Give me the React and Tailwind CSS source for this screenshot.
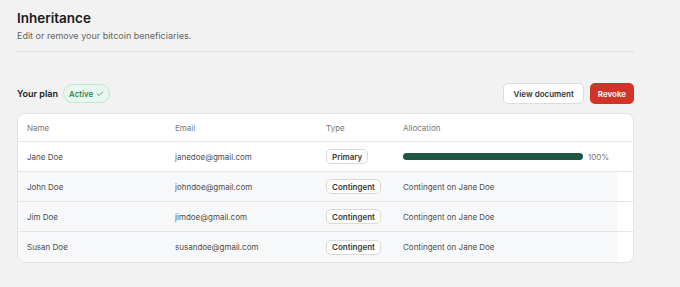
import { Check } from "lucide-react";

const rows = [
  { name: "Jane Doe", email: "janedoe@gmail.com", type: "Primary", alloc: 100 },
  { name: "John Doe", email: "johndoe@gmail.com", type: "Contingent", on: "Jane Doe" },
  { name: "Jim Doe", email: "jimdoe@gmail.com", type: "Contingent", on: "Jane Doe" },
  { name: "Susan Doe", email: "susandoe@gmail.com", type: "Contingent", on: "Jane Doe" },
];

function Badge({ children }) {
  return (
    <span className="inline-flex h-[15px] items-center rounded-[5px] border border-[#d9d9d9] bg-white px-[5px] text-[8px] font-semibold text-[#3a3a3a]">
      {children}
    </span>
  );
}

function Row({ row, last }) {
  const shaded = row.type != "Primary";
  return (
    <div className={"flex h-[30px] " + (last ? "" : "border-b border-[#e6e6e6]")}>
      <div
        className={
          "grid h-full w-[599px] grid-cols-[148px_151px_77px_1fr] items-center pl-[9px] " +
          (shaded ? "bg-[#f7f8fa]" : "bg-white")
        }
      >
        <div className="text-[#4d4d4d]">{row.name}</div>
        <div className="text-[#4d4d4d]">{row.email}</div>
        <div>
          <Badge>{row.type}</Badge>
        </div>
        {row.alloc ? (
          <div className="flex items-center gap-[5px]">
            <div className="h-[7px] w-[180px] rounded-full bg-[#1e5641]" />
            <span className="text-[#777]">{row.alloc}%</span>
          </div>
        ) : (
          <div className="text-[#4d4d4d]">Contingent on {row.on}</div>
        )}
      </div>
    </div>
  );
}

export default function App() {
  return (
    <div
      className="min-h-[287px] bg-[#f2f2f2] pl-[17px] pt-[9px]"
      style={{ fontFamily: "Inter, 'Noto Sans', sans-serif" }}
    >
      <div className="w-[617px]">
        <h1 className="text-[13.5px] leading-[19px] font-semibold text-[#1a1a1a]">Inheritance</h1>
        <p className="mt-[1px] text-[9px] leading-[14px] text-[#666]">Edit or remove your bitcoin beneficiaries.</p>
        <div className="mt-[8px] h-px bg-[#dcdcdc]" />

        <div className="mt-[31px] flex items-center justify-between">
          <div className="flex items-center gap-[5px]">
            <span className="text-[9px] font-semibold text-[#1a1a1a]">Your plan</span>
            <span className="inline-flex h-[19px] items-center gap-[3px] rounded-full border border-[#bfe8cf] bg-[#e9f8ef] px-[5px] text-[8px] font-medium text-[#1f7a46]">
              Active
              <Check size={8} strokeWidth={2} />
            </span>
          </div>
          <div className="flex items-center gap-[6px]">
            <button className="h-[21px] rounded-[5px] border border-[#dcdcdc] bg-white px-[9px] text-[8px] font-semibold text-[#333]">
              View document
            </button>
            <button className="h-[21px] rounded-[5px] bg-[#d2322a] px-[8px] text-[8px] font-semibold text-white">
              Revoke
            </button>
          </div>
        </div>

        <div className="mt-[9px] overflow-hidden rounded-[8px] border border-[#e3e3e3] bg-white text-[8px]">
          <div className="grid h-[28px] grid-cols-[148px_151px_77px_1fr] items-center border-b border-[#e6e6e6] pl-[9px] text-[#777]">
            <div>Name</div>
            <div>Email</div>
            <div>Type</div>
            <div>Allocation</div>
          </div>
          {rows.map((r, i) => (
            <Row key={i} row={r} last={i == rows.length - 1} />
          ))}
        </div>
      </div>
    </div>
  );
}
